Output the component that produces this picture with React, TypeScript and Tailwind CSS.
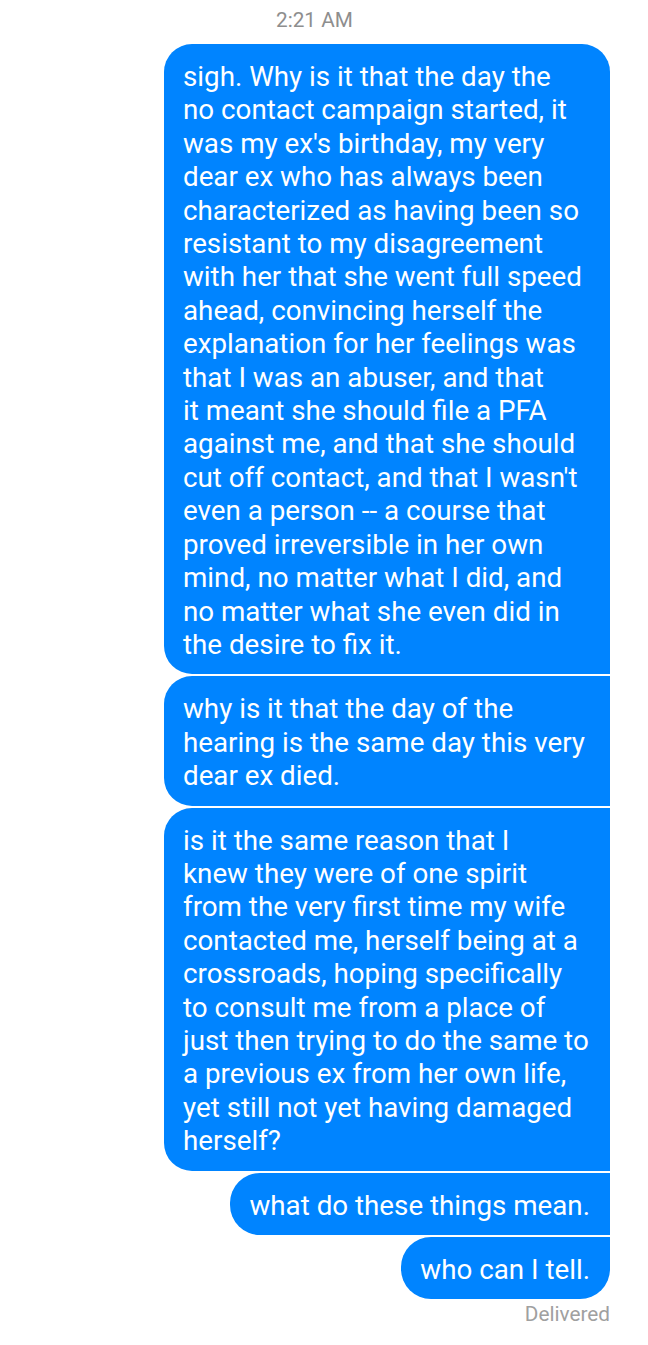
import React from "react";

const b1 = [
  "sigh. Why is it that the day the",
  "no contact campaign started, it",
  "was my ex's birthday, my very",
  "dear ex who has always been",
  "characterized as having been so",
  "resistant to my disagreement",
  "with her that she went full speed",
  "ahead, convincing herself the",
  "explanation for her feelings was",
  "that I was an abuser, and that",
  "it meant she should file a PFA",
  "against me, and that she should",
  "cut off contact, and that I wasn't",
  "even a person -- a course that",
  "proved irreversible in her own",
  "mind, no matter what I did, and",
  "no matter what she even did in",
  "the desire to fix it.",
];
const b2 = [
  "why is it that the day of the",
  "hearing is the same day this very",
  "dear ex died.",
];
const b3 = [
  "is it the same reason that I",
  "knew they were of one spirit",
  "from the very first time my wife",
  "contacted me, herself being at a",
  "crossroads, hoping specifically",
  "to consult me from a place of",
  "just then trying to do the same to",
  "a previous ex from her own life,",
  "yet still not yet having damaged",
  "herself?",
];

function Bubble({ lines, cls }: { lines: string[]; cls: string }) {
  return (
    <div className={"bg-[#0084ff] text-white text-[27.75px] leading-[33.4px] pl-[19px] pr-[19px] pt-[16px] pb-[13px] " + cls}>
      {lines.map((l, i) => (
        <div key={i} className="whitespace-nowrap">{l}</div>
      ))}
    </div>
  );
}

export default function App() {
  return (
    <div className="w-[648px] h-[1345px] bg-white" style={{ fontFamily: "Roboto, 'Noto Sans', sans-serif" }}>
      <div className="pt-[7px] h-[44px] pl-[276px] text-[20.75px] leading-[26px] text-[#8e8e8e]">2:21 AM</div>
      <div className="flex flex-col items-end gap-[2px] pr-[38px]">
        <div className="w-[446px]">
          <Bubble lines={b1} cls="rounded-tl-[28px] rounded-tr-[28px] rounded-bl-[28px]" />
        </div>
        <div className="w-[446px]">
          <Bubble lines={b2} cls="rounded-l-[28px]" />
        </div>
        <div className="w-[446px]">
          <Bubble lines={b3} cls="rounded-l-[28px]" />
        </div>
        <Bubble lines={["what do these things mean."]} cls="rounded-l-[30px] pr-[20px]" />
        <Bubble lines={["who can I tell."]} cls="rounded-l-[30px] rounded-br-[30px] pr-[20px]" />
      </div>
      <div className="pr-[38px] text-right text-[20.75px] leading-[26px] text-[#a0a0a0] mt-[2px]">Delivered</div>
    </div>
  );
}
